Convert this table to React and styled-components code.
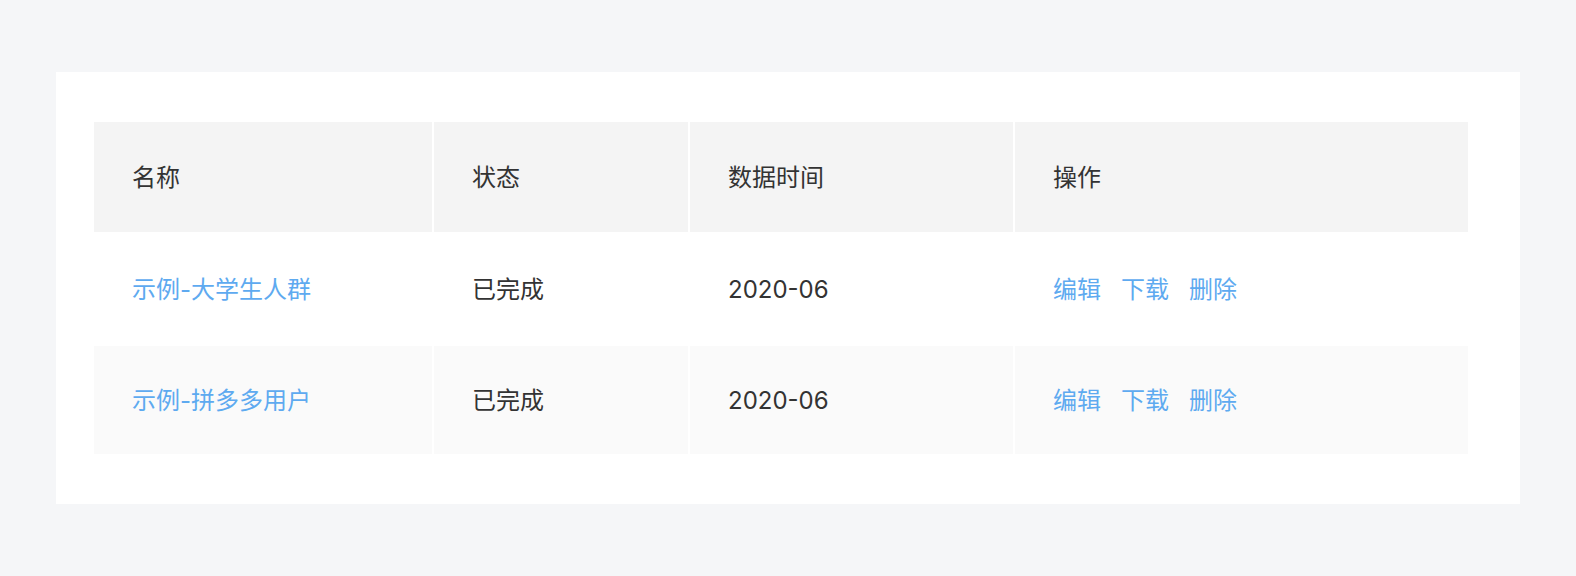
import React from "react";
import styled, { createGlobalStyle } from "styled-components";

const GlobalStyle = createGlobalStyle`
  html, body {
    margin: 0;
    padding: 0;
    background: #f5f6f8;
    font-family: Inter, "Noto Sans CJK SC", sans-serif;
  }
  * { box-sizing: border-box; }
`;

const Page = styled.div`
  width: 1576px;
  height: 576px;
  padding: 72px 0 0 56px;
  background: #f5f6f8;
`;

const Card = styled.div`
  width: 1464px;
  height: 432px;
  background: #ffffff;
  padding: 50px 52px 50px 38px;
`;

const Table = styled.div`
  display: flex;
  flex-direction: column;
  width: 1374px;
`;

const Row = styled.div`
  display: grid;
  grid-template-columns: 338px 254px 323px 453px;
  column-gap: 2px;
  height: ${(p) => p.$h}px;
`;

const Cell = styled.div`
  display: flex;
  align-items: center;
  padding: 1px 0 0 38px;
  background: ${(p) => p.$bg};
  font-size: 24px;
  line-height: 32px;
  color: #333333;
  white-space: nowrap;
`;

const Name = styled.span`
  color: #5eaaf0;
`;

const Actions = styled.div`
  display: flex;
  gap: 20px;
`;

const Action = styled.span`
  color: #5eaaf0;
  cursor: pointer;
`;

const columns = ["名称", "状态", "数据时间", "操作"];

const rows = [
  { name: "示例-大学生人群", status: "已完成", time: "2020-06", bg: "#ffffff", h: 114 },
  { name: "示例-拼多多用户", status: "已完成", time: "2020-06", bg: "#fafafa", h: 108 },
];

export default function App() {
  return (
    <>
      <GlobalStyle />
      <Page>
        <Card>
          <Table>
            <Row $h={110}>
              {columns.map((c) => (
                <Cell key={c} $bg="#f4f4f4">{c}</Cell>
              ))}
            </Row>
            {rows.map((r) => (
              <Row key={r.name} $h={r.h}>
                <Cell $bg={r.bg}><Name>{r.name}</Name></Cell>
                <Cell $bg={r.bg}>{r.status}</Cell>
                <Cell $bg={r.bg}>{r.time}</Cell>
                <Cell $bg={r.bg}>
                  <Actions>
                    <Action>编辑</Action>
                    <Action>下载</Action>
                    <Action>删除</Action>
                  </Actions>
                </Cell>
              </Row>
            ))}
          </Table>
        </Card>
      </Page>
    </>
  );
}
